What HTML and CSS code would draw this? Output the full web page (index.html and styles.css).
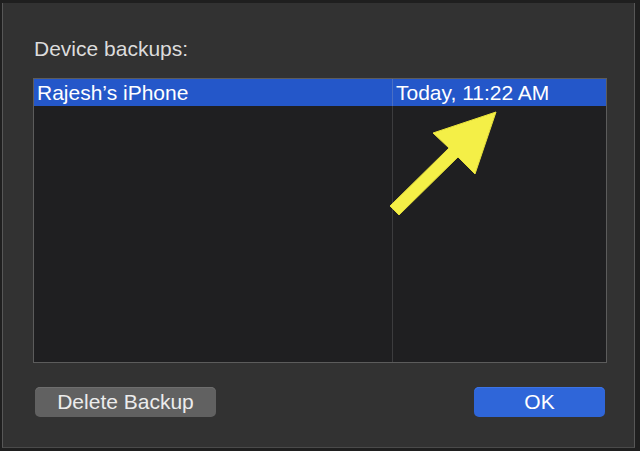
FILE: index.html
```html
<!DOCTYPE html>
<html>
<head>
<meta charset="utf-8">
<link rel="stylesheet" href="styles.css">
</head>
<body>
<div class="outer">
  <div class="dialog">
    <div class="label">Device backups:</div>
    <div class="table">
      <div class="row selected">
        <div class="cell name">Rajesh’s iPhone</div>
        <div class="cell date">Today, 11:22 AM</div>
      </div>
      <div class="rest">
        <div class="col1"></div>
        <div class="col2"></div>
      </div>
    </div>
    <div class="buttons">
      <button class="btn secondary">Delete Backup</button>
      <button class="btn primary">OK</button>
    </div>
  </div>
  <svg class="arrow" width="640" height="451" viewBox="0 0 640 451">
    <polygon points="496,112 433,133 449,148 390,206 399,215 458,157 475,174" fill="#f4ef47" stroke="#e6e03a" stroke-width="1"/>
  </svg>
</div>
</body>
</html>
```
FILE: styles.css
```css
html, body {
  margin: 0;
  padding: 0;
  background: #202020;
  width: 640px;
  height: 451px;
  overflow: hidden;
}
.outer {
  position: relative;
  width: 640px;
  height: 451px;
  box-sizing: border-box;
  padding: 3px 5px 3px 2px;
  background: #1f1f1f;
}
.dialog {
  box-sizing: border-box;
  height: 445px;
  background: #323232;
  border-left: 1px solid #575757;
  border-right: 1px solid #575757;
  border-bottom: 1px solid #4a4a4a;
  padding: 33px 0 0 30px;
  font-family: "Liberation Sans", Arial, sans-serif;
}
.label {
  color: #dcdcdc;
  font-size: 21px;
  line-height: 26px;
  margin-bottom: 16px;
  padding-left: 1px;
}
.table {
  width: 574px;
  height: 285px;
  box-sizing: border-box;
  border: 1px solid #5c5c5c;
  background: #1f1f21;
  display: flex;
  flex-direction: column;
}
.row {
  display: grid;
  grid-template-columns: 358px 1fr;
  height: 27px;
}
.row.selected {
  background: #2457c9;
}
.cell {
  color: #ffffff;
  font-size: 21px;
  line-height: 28px;
  padding-left: 3px;
  white-space: nowrap;
}
.date {
  border-left: 1px solid #4a6fc4;
  padding-left: 3px;
}
.rest {
  flex: 1;
  display: grid;
  grid-template-columns: 358px 1fr;
}
.col2 {
  border-left: 1px solid #3c3c3e;
}
.buttons {
  display: flex;
  justify-content: space-between;
  width: 570px;
  margin-top: 24px;
  padding-left: 2px;
}
.btn {
  height: 30px;
  border: none;
  border-radius: 5px;
  font-family: "Liberation Sans", Arial, sans-serif;
  font-size: 21px;
  color: #ececec;
  padding: 0;
}
.secondary {
  width: 181px;
  background: #616161;
  box-shadow: inset 0 1px 0 #6e6e6e;
}
.primary {
  width: 131px;
  background: #2f66d9;
  color: #ffffff;
  box-shadow: inset 0 1px 0 #3c74e6;
}
.arrow {
  position: absolute;
  left: 0;
  top: 0;
  pointer-events: none;
}
```
